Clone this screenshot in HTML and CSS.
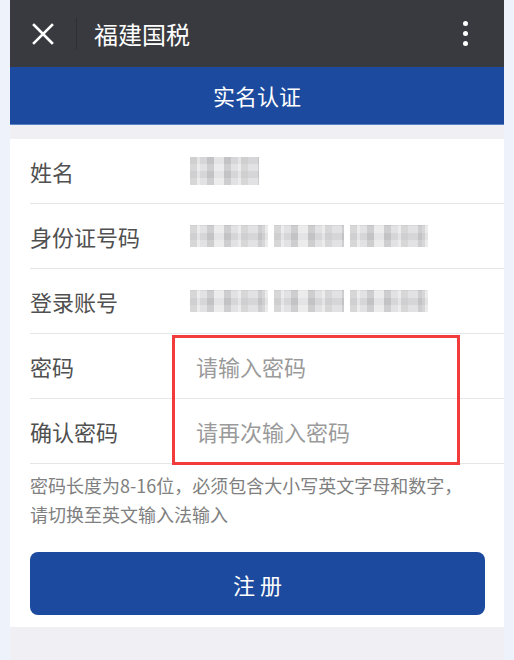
FILE: index.html
```html
<!DOCTYPE html>
<html lang="zh-CN">

<head>
    <meta charset="UTF-8">
    <meta name="viewport" content="width=device-width, initial-scale=1.0">
    <title>实名认证</title>
    <link rel="stylesheet" href="styles.css">
</head>

<body>
    <div class="phone">
        <div class="topbar">
            <span class="close">
                <svg width="22" height="22" viewBox="0 0 22 22">
                    <path d="M2 2 L20 20 M20 2 L2 20" stroke="#fff" stroke-width="2.6" stroke-linecap="square" />
                </svg>
            </span>
            <span class="sep"></span>
            <span class="app-title">福建国税</span>
            <span class="more">
                <i></i><i></i><i></i>
            </span>
        </div>
        <div class="page-title">实名认证</div>

        <div class="form">
            <div class="row">
                <span class="label">姓名</span>
                <span class="value"><b class="mosaic name"></b></span>
            </div>
            <div class="row">
                <span class="label">身份证号码</span>
                <span class="value">
                    <b class="mosaic seg1"></b><b class="mosaic seg2"></b><b class="mosaic seg3"></b>
                </span>
            </div>
            <div class="row">
                <span class="label">登录账号</span>
                <span class="value">
                    <b class="mosaic seg1"></b><b class="mosaic seg2"></b><b class="mosaic seg3"></b>
                </span>
            </div>
            <div class="row">
                <span class="label">密码</span>
                <input class="field" type="password" placeholder="请输入密码">
            </div>
            <div class="row">
                <span class="label">确认密码</span>
                <input class="field" type="password" placeholder="请再次输入密码">
            </div>
            <div class="mark"></div>
        </div>

        <div class="bottom">
            <p class="hint">密码长度为8-16位，必须包含大小写英文字母和数字，<br>请切换至英文输入法输入</p>
            <button class="btn">注 册</button>
        </div>
    </div>
</body>

</html>
```

FILE: styles.css
```css
* {
    margin: 0;
    padding: 0;
    box-sizing: border-box;
}

body {
    background: #eef3fb;
    font-family: "Noto Sans CJK SC", "Noto Sans", sans-serif;
}

.phone {
    width: 494px;
    height: 660px;
    margin-left: 10px;
    background: #efeff4;
}

.topbar {
    height: 67px;
    background: #393a3f;
    display: flex;
    align-items: center;
    color: #fff;
}

.topbar .close {
    width: 22px;
    height: 22px;
    margin-left: 22px;
    display: flex;
}

.topbar .sep {
    width: 1px;
    height: 32px;
    background: #2e2f33;
    margin-left: 22px;
}

.topbar .app-title {
    margin-left: 17px;
    font-size: 24px;
    line-height: 30px;
    flex: 1;
}

.topbar .more {
    display: flex;
    flex-direction: column;
    gap: 5px;
    margin-right: 36px;
}

.topbar .more i {
    width: 5px;
    height: 5px;
    border-radius: 50%;
    background: #fff;
}

.page-title {
    height: 58px;
    background: #1b4a9e;
    border-bottom: 1px solid #5a80c6;
    color: #fff;
    font-size: 22px;
    text-align: center;
    line-height: 57px;
    margin-bottom: 14px;
}

.form {
    position: relative;
    background: #fff;
    padding-left: 20px;
}

.row {
    height: 65px;
    border-bottom: 1px solid #e6e6e8;
    display: flex;
    align-items: center;
}

.label {
    width: 160px;
    font-size: 22px;
    color: #505050;
}

.value {
    display: flex;
    gap: 6px;
}

.mosaic {
    display: block;
    height: 22px;
    background-color: #d6d6d8;
    background-image:
        repeating-linear-gradient(90deg, rgba(0, 0, 0, .09) 0 7px, transparent 7px 17px),
        repeating-linear-gradient(90deg, rgba(255, 255, 255, .35) 0 10px, transparent 10px 24px),
        repeating-linear-gradient(0deg, rgba(255, 255, 255, .3) 0 7px, transparent 7px 14px);
    filter: blur(0.6px);
}

.mosaic.name {
    width: 69px;
    height: 28px;
}

.mosaic.seg1 {
    width: 78px;
}

.mosaic.seg2 {
    width: 70px;
}

.mosaic.seg3 {
    width: 78px;
}

.field {
    border: 0;
    outline: none;
    font-family: inherit;
    font-size: 22px;
    color: #333;
    padding-left: 6px;
    width: 270px;
}

.field::placeholder {
    color: #9a9a9a;
}

.mark {
    position: absolute;
    left: 162px;
    top: 196px;
    width: 288px;
    height: 130px;
    border: 3px solid #f23b3b;
    pointer-events: none;
}

.bottom {
    background: #fff;
    padding: 7px 19px 12px 20px;
}

.hint {
    font-size: 18px;
    line-height: 29px;
    color: #808080;
}

.btn {
    display: block;
    width: 100%;
    height: 63px;
    margin-top: 23px;
    border: 0;
    border-radius: 8px;
    background: #1b4a9e;
    color: #fff;
    font-family: inherit;
    font-size: 22px;
}
```
